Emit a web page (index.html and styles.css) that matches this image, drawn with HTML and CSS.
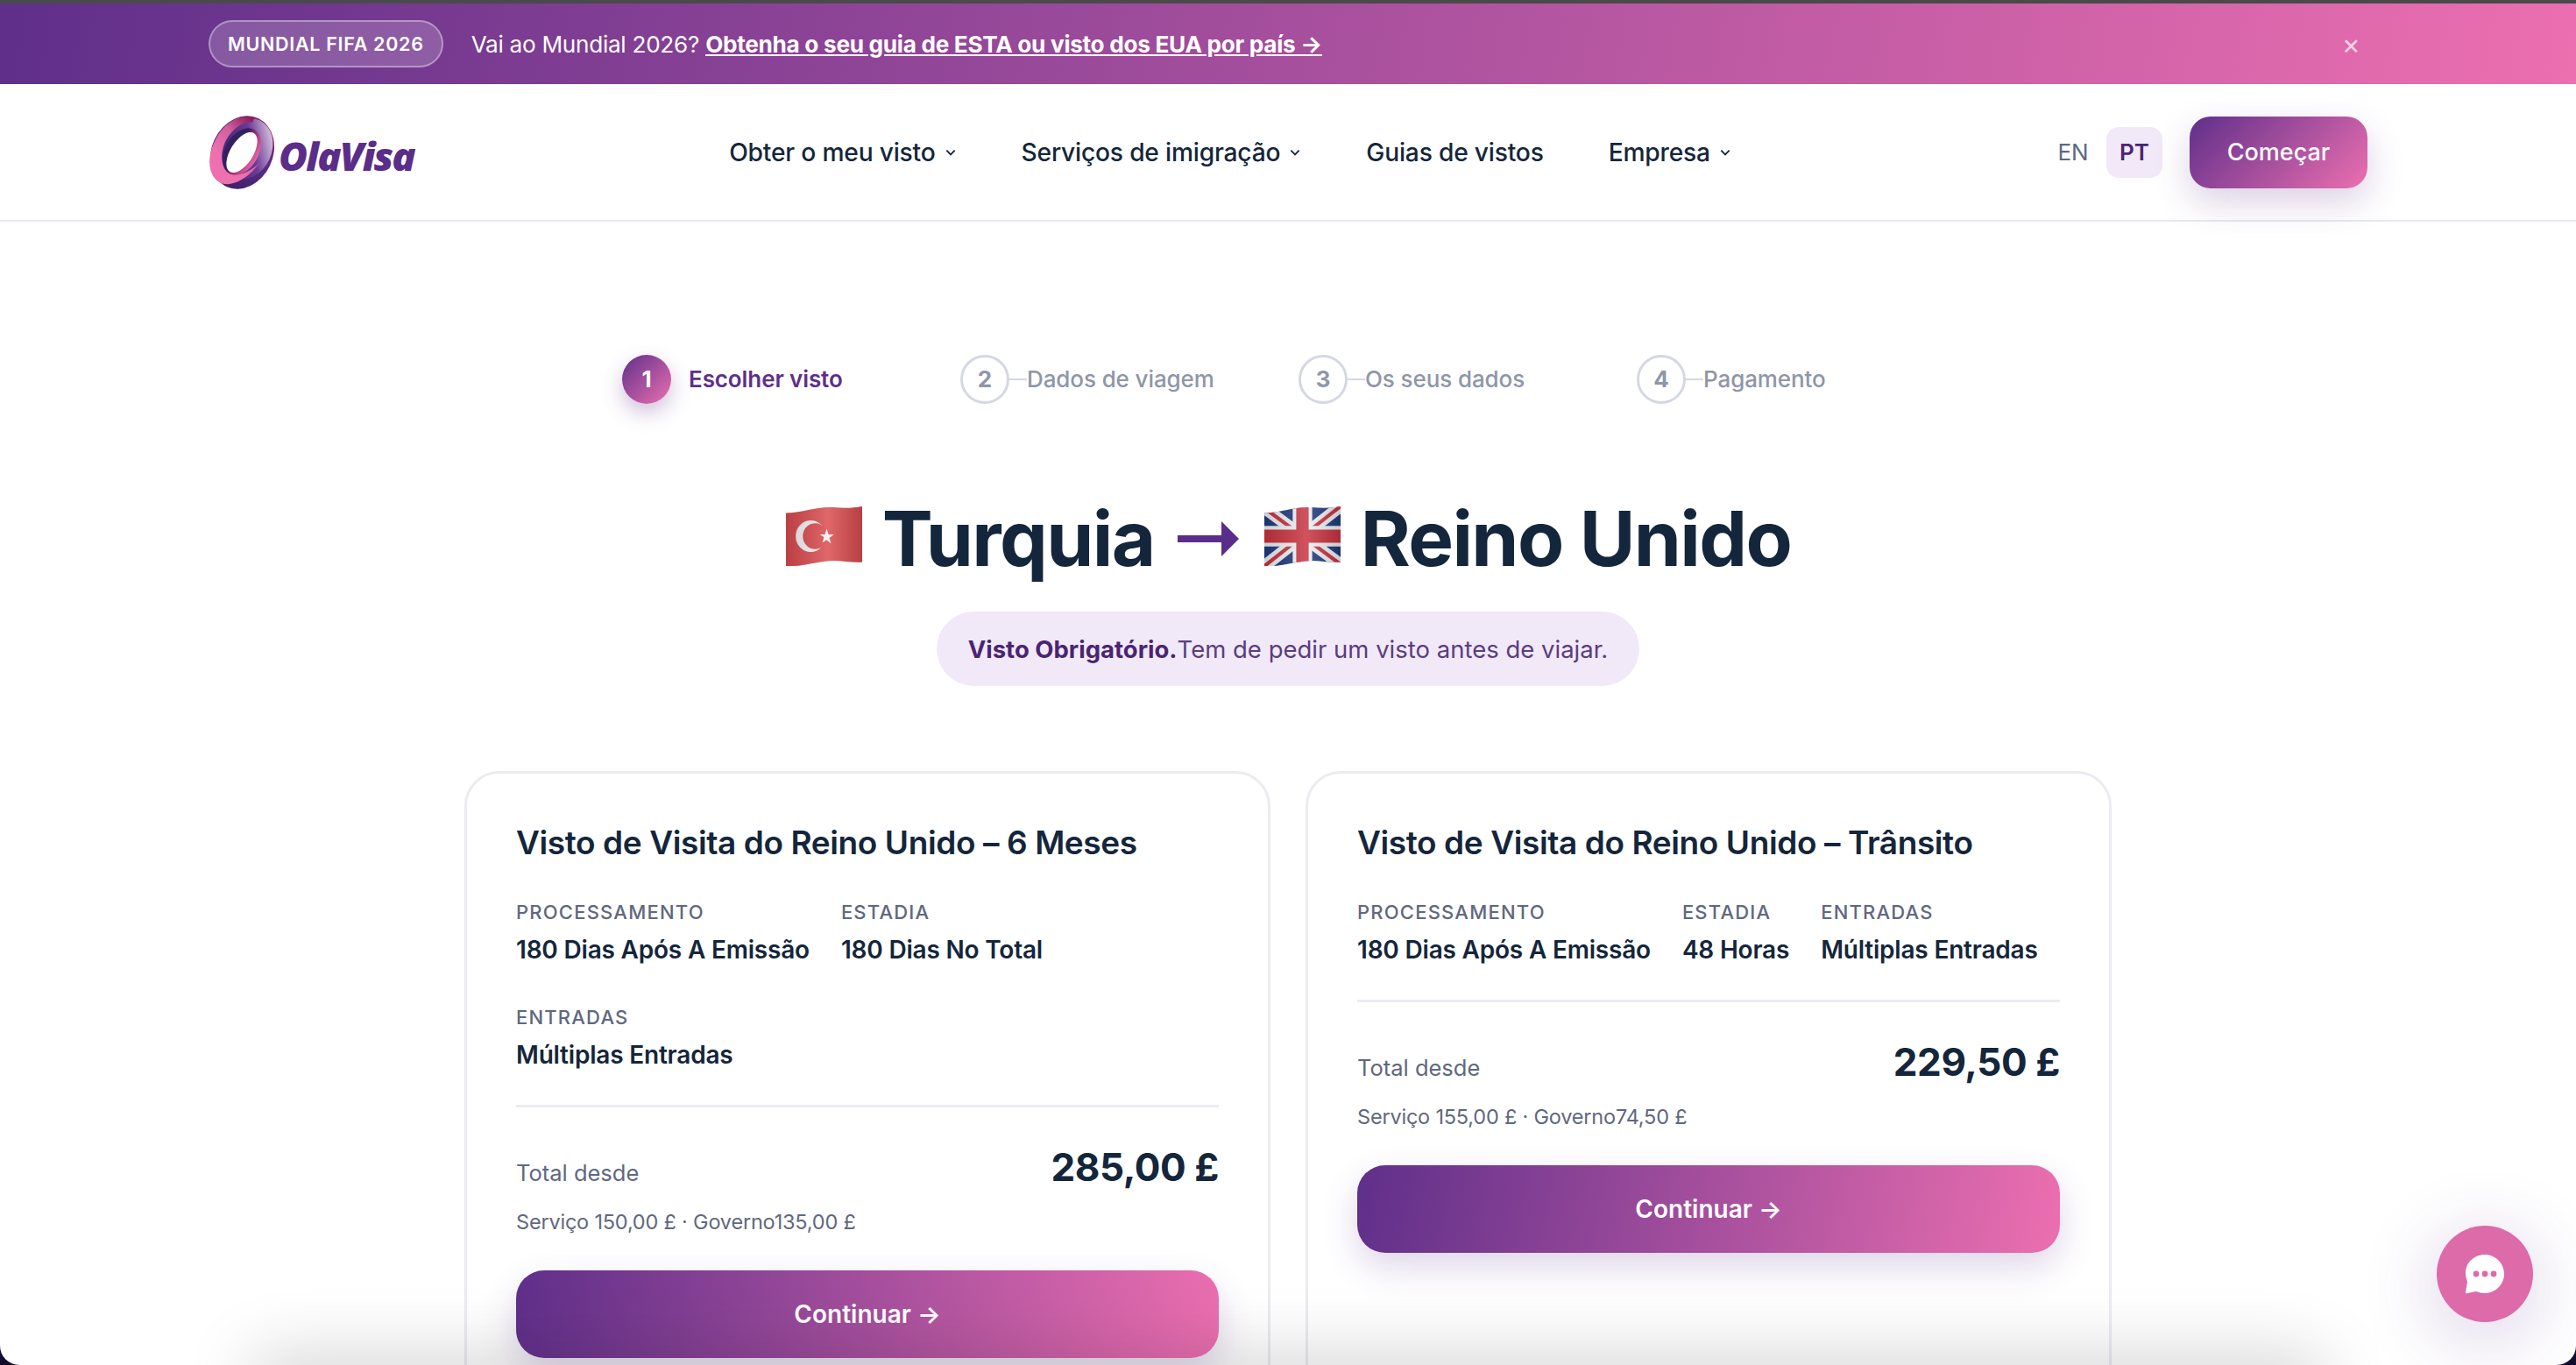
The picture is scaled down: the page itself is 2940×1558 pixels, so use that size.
FILE: index.html
```html
<!DOCTYPE html>
<html lang="pt">
<head>
    <meta charset="UTF-8">
    <title>OlaVisa</title>
    <link rel="stylesheet" href="styles.css">
</head>
<body>
    <div class="window">
        <!-- Promo banner -->
        <div class="banner">
            <div class="banner-inner">
                <span class="banner-badge">MUNDIAL FIFA 2026</span>
                <span class="banner-text">Vai ao Mundial 2026? <a href="#">Obtenha o seu guia de ESTA ou visto dos EUA por país →</a></span>
                <span class="banner-close">×</span>
            </div>
        </div>

        <!-- Header -->
        <header class="header">
            <div class="header-inner">
                <a href="#" class="logo">
                    <svg class="logo-ring" viewBox="0 0 78 84" width="78" height="84">
                        <defs>
                            <linearGradient id="ringBack" x1="0.6" y1="0" x2="0.4" y2="1">
                                <stop offset="0" stop-color="#8c1f5c"/>
                                <stop offset="0.4" stop-color="#5b2d8a"/>
                                <stop offset="1" stop-color="#3d2068"/>
                            </linearGradient>
                            <linearGradient id="ringPink" x1="0.8" y1="0" x2="0.2" y2="0.8">
                                <stop offset="0" stop-color="#8c1f5c"/>
                                <stop offset="0.4" stop-color="#d2609e"/>
                                <stop offset="0.8" stop-color="#ee70ae"/>
                            </linearGradient>
                            <linearGradient id="ringBand" x1="0.95" y1="0.1" x2="0.3" y2="0.7">
                                <stop offset="0" stop-color="#f0e0ec"/>
                                <stop offset="0.55" stop-color="#6a3a96"/>
                                <stop offset="1" stop-color="#4f2a80"/>
                            </linearGradient>
                            <linearGradient id="ringHole" x1="0" y1="0.5" x2="1" y2="0.5">
                                <stop offset="0.35" stop-color="#33205f"/>
                                <stop offset="0.6" stop-color="#a62f74"/>
                                <stop offset="1" stop-color="#e06aa8"/>
                            </linearGradient>
                        </defs>
                        <ellipse cx="38.5" cy="42" rx="35" ry="43" transform="rotate(25 38.5 42)" fill="url(#ringBack)"/>
                        <ellipse cx="43" cy="38" rx="29" ry="36" transform="rotate(25 43 38)" fill="url(#ringBand)"/>
                        <path d="M52 3C30-4 8 16 2 44c-4 20 6 36 22 34 12-2 24-10 34-24-8 8-22 16-32 12-12-4-14-22-6-38C28 14 40 6 50 8z" fill="url(#ringPink)"/>
                        <ellipse cx="38" cy="41" rx="19" ry="29" transform="rotate(30 38 41)" fill="url(#ringHole)"/>
                        <ellipse cx="38" cy="42" rx="13" ry="26" transform="rotate(32 38 42)" fill="#fff"/>
                    </svg>
                    <span class="logo-text">OlaVisa</span>
                </a>
                <nav class="nav">
                    <a href="#" class="nav-link">Obter o meu visto <svg class="chevron" viewBox="0 0 12 8"><path d="M2 2l4 4 4-4"/></svg></a>
                    <a href="#" class="nav-link">Serviços de imigração <svg class="chevron" viewBox="0 0 12 8"><path d="M2 2l4 4 4-4"/></svg></a>
                    <a href="#" class="nav-link">Guias de vistos</a>
                    <a href="#" class="nav-link">Empresa <svg class="chevron" viewBox="0 0 12 8"><path d="M2 2l4 4 4-4"/></svg></a>
                </nav>
                <div class="header-right">
                    <a href="#" class="lang">EN</a>
                    <a href="#" class="lang lang-active">PT</a>
                    <a href="#" class="start-button">Começar</a>
                </div>
            </div>
        </header>

        <main class="main">
            <!-- Steps -->
            <div class="steps">
                <div class="step step-active"><span class="step-num">1</span><span class="step-label">Escolher visto</span></div>
                <div class="step"><span class="step-num">2</span><span class="step-line"></span><span class="step-label">Dados de viagem</span></div>
                <div class="step"><span class="step-num">3</span><span class="step-line"></span><span class="step-label">Os seus dados</span></div>
                <div class="step"><span class="step-num">4</span><span class="step-line"></span><span class="step-label">Pagamento</span></div>
            </div>

            <h1 class="route">
                <svg class="flag" viewBox="0 0 88 66" preserveAspectRatio="none">
                    <defs>
                        <clipPath id="flagWave"><path d="M1 8C18 8 36 1 54 2c12 1 22 1 33-1v60c-14 1-26-3-42-1-16 2-30 6-44 5z"/></clipPath>
                        <linearGradient id="flagShine" x1="0" y1="0" x2="1" y2="0">
                            <stop offset="0" stop-color="#000" stop-opacity=".14"/>
                            <stop offset="0.55" stop-color="#fff" stop-opacity=".16"/>
                            <stop offset="1" stop-color="#000" stop-opacity=".16"/>
                        </linearGradient>
                    </defs>
                    <g clip-path="url(#flagWave)">
                        <rect width="88" height="66" fill="#d94a4e"/>
                        <circle cx="29" cy="33" r="17" fill="#f4f1f1"/>
                        <circle cx="34" cy="33" r="14" fill="#d8484c"/>
                        <path d="M47 25l2 6 6 0-5 4 2 6-5-4-5 3 2-6-5-3 6 0z" fill="#f4f1f1"/>
                        <rect width="88" height="66" fill="url(#flagShine)"/>
                    </g>
                </svg>
                <span>Turquia</span>
                <svg class="route-arrow" viewBox="0 0 70 40"><path d="M0 16h50V0l20 20-20 20V24H0z"/></svg>
                <svg class="flag" viewBox="0 0 88 66" preserveAspectRatio="none">
                    <g clip-path="url(#flagWave)">
                        <rect width="88" height="66" fill="#1f3a7c"/>
                        <path d="M0 2l88 62M88 0L0 66" stroke="#eef0f4" stroke-width="13"/>
                        <path d="M0 2l88 62M88 0L0 66" stroke="#c8323f" stroke-width="4"/>
                        <path d="M44 0v66M0 33h88" stroke="#eef0f4" stroke-width="22"/>
                        <path d="M44 0v66M0 33h88" stroke="#c8323f" stroke-width="14"/>
                        <rect width="88" height="66" fill="url(#flagShine)"/>
                    </g>
                </svg>
                <span>Reino Unido</span>
            </h1>

            <p class="notice"><strong>Visto Obrigatório.</strong>Tem de pedir um visto antes de viajar.</p>

            <!-- Visa cards -->
            <div class="cards">
                <div class="card">
                    <h3 class="card-title">Visto de Visita do Reino Unido – 6 Meses</h3>
                    <div class="facts">
                        <div class="fact"><span class="fact-label">PROCESSAMENTO</span><span class="fact-value">180 Dias Após A Emissão</span></div>
                        <div class="fact"><span class="fact-label">ESTADIA</span><span class="fact-value">180 Dias No Total</span></div>
                        <div class="fact"><span class="fact-label">ENTRADAS</span><span class="fact-value">Múltiplas Entradas</span></div>
                    </div>
                    <div class="total-row"><span class="total-label">Total desde</span><span class="total-price">285,00 £</span></div>
                    <p class="breakdown">Serviço 150,00 £ · Governo135,00 £</p>
                    <a href="#" class="continue-button">Continuar →</a>
                </div>
                <div class="card">
                    <h3 class="card-title">Visto de Visita do Reino Unido – Trânsito</h3>
                    <div class="facts">
                        <div class="fact"><span class="fact-label">PROCESSAMENTO</span><span class="fact-value">180 Dias Após A Emissão</span></div>
                        <div class="fact"><span class="fact-label">ESTADIA</span><span class="fact-value">48 Horas</span></div>
                        <div class="fact"><span class="fact-label">ENTRADAS</span><span class="fact-value">Múltiplas Entradas</span></div>
                    </div>
                    <div class="total-row"><span class="total-label">Total desde</span><span class="total-price">229,50 £</span></div>
                    <p class="breakdown">Serviço 155,00 £ · Governo74,50 £</p>
                    <a href="#" class="continue-button">Continuar →</a>
                </div>
            </div>
        </main>

        <!-- Soft shadow from something below the fold -->
        <div class="bottom-shadow"></div>

        <!-- Chat button -->
        <a href="#" class="chat-button">
            <svg viewBox="0 0 46 46" width="46" height="46">
                <path d="M23 1C11 1 1 10 1 22c0 4 1 7 2 10l-2 12c0 1 1 2 2 1l10-2c3 1 6 2 10 2 12 0 22-10 22-22S35 1 23 1z" fill="#fff"/>
                <circle cx="13" cy="23" r="3.4" fill="#dd6aa9"/>
                <circle cx="23" cy="23" r="3.4" fill="#dd6aa9"/>
                <circle cx="33" cy="23" r="3.4" fill="#dd6aa9"/>
            </svg>
        </a>
    </div>
</body>
</html>
```

FILE: styles.css
```css
/* General reset */
* {
    margin: 0;
    padding: 0;
    box-sizing: border-box;
}

html, body {
    height: 100%;
    overflow: hidden;
    background-color: #130c30;
}

body {
    font-family: Inter, "Liberation Sans", sans-serif;
    color: #14263b;
}

a {
    text-decoration: none;
    color: inherit;
}

/* Page clipped to the rounded bottom of the window */
.window {
    position: relative;
    height: 100%;
    overflow: hidden;
    background-color: #fff;
    border-radius: 0 0 22px 22px;
}

/* Promo banner */
.banner {
    height: 96px;
    border-top: 4px solid #4a4a4a;
    background: linear-gradient(100deg, #5f2f8a, #ec6fb0);
    color: #fff;
}

.banner-inner {
    max-width: 2464px;
    height: 100%;
    margin: 0 auto;
    display: flex;
    align-items: center;
}

.banner-badge {
    padding: 12px 20px;
    font-size: 21.5px;
    font-weight: 600;
    line-height: 26px;
    letter-spacing: 0.7px;
    background-color: rgba(255, 255, 255, 0.18);
    border: 2px solid rgba(255, 255, 255, 0.35);
    border-radius: 40px;
    margin-right: 32px;
}

.banner-text {
    font-size: 26.2px;
    letter-spacing: -0.3px;
}

.banner-text a {
    font-weight: 700;
    text-decoration: underline;
}

.banner-close {
    margin-left: auto;
    font-size: 32px;
    margin-right: 8px;
    opacity: 0.7;
}

/* Header */
.header {
    height: 157px;
    border-bottom: 2px solid #e7e8ef;
}

.header-inner {
    max-width: 2464px;
    height: 100%;
    margin: 0 auto;
    display: flex;
    align-items: center;
    justify-content: space-between;
}

.logo {
    display: flex;
    align-items: center;
    width: 236px;
}

.logo-ring {
    flex-shrink: 0;
}

.logo-text {
    margin: 8px 0 0 2px;
    font-family: "Open Sans", sans-serif;
    font-size: 45px;
    font-weight: 800;
    font-style: italic;
    letter-spacing: -1.8px;
    color: #5b2d8a;
}

.nav {
    display: flex;
    gap: 74px;
}

.nav-link {
    display: flex;
    align-items: center;
    gap: 10px;
    font-size: 28.2px;
    font-weight: 500;
    letter-spacing: -0.2px;
    color: #14263b;
}

.chevron {
    width: 14px;
    height: 10px;
    fill: none;
    stroke: #14263b;
    stroke-width: 1.6;
}

.header-right {
    display: flex;
    align-items: center;
}

.lang {
    width: 64px;
    height: 58px;
    display: flex;
    align-items: center;
    justify-content: center;
    font-size: 26px;
    color: #5f6880;
    border-radius: 14px;
}

.lang:first-child {
    margin-right: 6px;
}

.lang-active {
    background-color: #f1e9f8;
    color: #4a2472;
    font-weight: 600;
    margin-right: 31px;
}

.start-button {
    width: 203px;
    height: 82px;
    display: flex;
    align-items: center;
    justify-content: center;
    font-size: 27px;
    font-weight: 500;
    color: #fff;
    border-radius: 24px;
    background: linear-gradient(135deg, #5f2f8a, #ec6fb0);
    box-shadow: 0 16px 40px rgba(95, 47, 138, 0.22);
}

/* Main content */
.main {
    max-width: 2464px;
    margin: 0 auto;
    padding-top: 152px;
    display: flex;
    flex-direction: column;
    align-items: center;
}

.steps {
    display: grid;
    grid-template-columns: repeat(4, 386px);
    padding-left: 24px;
}

.step {
    display: flex;
    align-items: center;
    font-size: 26px;
    line-height: 52px;
    font-weight: 500;
    letter-spacing: -0.1px;
    color: #8f96a8;
}

.step-num {
    width: 56px;
    height: 56px;
    border-radius: 50%;
    border: 3px solid #d5d8e2;
    display: flex;
    align-items: center;
    justify-content: center;
    font-weight: 700;
    flex-shrink: 0;
}

.step-line {
    width: 20px;
    height: 2px;
    background-color: #d5d8e2;
}

.step-active {
    color: #5f2f8a;
    font-weight: 600;
}

.step-active .step-num {
    border: none;
    color: #fff;
    background: linear-gradient(135deg, #5f2f8a, #ec6fb0);
    box-shadow: 0 10px 24px rgba(95, 47, 138, 0.3);
    margin-right: 20px;
}

.route {
    display: flex;
    align-items: center;
    margin-top: 106px;
    font-size: 87px;
    font-weight: 700;
    line-height: 96px;
    letter-spacing: -1.6px;
    color: #14263b;
}

.flag {
    width: 89px;
    height: 70px;
    margin: 0 22px 6px 0;
}

.route-arrow {
    width: 70px;
    height: 40px;
    margin: 0 28px 0 26px;
    fill: #5b2d8a;
}

.notice {
    margin-top: 35px;
    padding: 0 36px;
    height: 85px;
    display: flex;
    align-items: center;
    font-size: 27.5px;
    color: #5a3d80;
    background-color: #f1e9f8;
    border-radius: 43px;
}

.notice strong {
    font-weight: 700;
    color: #4a2472;
}

/* Visa cards */
.cards {
    margin-top: 97px;
    display: grid;
    grid-template-columns: repeat(2, 920px);
    gap: 40px;
    align-items: stretch;
}

.card {
    padding: 52px 56px;
    min-height: 900px;
    background-color: #fff;
    border: 3px solid #ebecf2;
    border-radius: 40px;
}

.card-title {
    font-size: 37px;
    font-weight: 600;
    line-height: 54px;
    letter-spacing: -0.4px;
    color: #14263b;
}

.facts {
    margin-top: 38px;
    padding-bottom: 38px;
    border-bottom: 3px solid #ebecf2;
    display: flex;
    flex-wrap: wrap;
    column-gap: 36px;
    row-gap: 44px;
}

.fact {
    display: flex;
    flex-direction: column;
    gap: 10px;
}

.fact-label {
    font-size: 22px;
    line-height: 28px;
    font-weight: 500;
    letter-spacing: 1.2px;
    color: #5f6880;
}

.fact-value {
    font-size: 28px;
    line-height: 38px;
    font-weight: 600;
    letter-spacing: -0.2px;
    color: #14263b;
}

.total-row {
    margin-top: 36px;
    display: flex;
    align-items: center;
    justify-content: space-between;
}

.total-label {
    margin-top: 12px;
    font-size: 25.5px;
    color: #5f6880;
}

.total-price {
    font-size: 44px;
    line-height: 64px;
    font-weight: 700;
    letter-spacing: -0.4px;
    color: #14263b;
}

.breakdown {
    margin-top: 14px;
    font-size: 23.5px;
    line-height: 34px;
    letter-spacing: -0.2px;
    color: #5f6880;
}

.continue-button {
    margin-top: 38px;
    height: 100px;
    display: flex;
    align-items: center;
    justify-content: center;
    font-size: 28px;
    font-weight: 600;
    color: #fff;
    border-radius: 32px;
    background: linear-gradient(100deg, #5f2f8a, #ec6fb0);
    box-shadow: 0 16px 40px rgba(95, 47, 138, 0.2);
}

/* Chat button */
.chat-button {
    position: absolute;
    right: 49px;
    bottom: 49px;
    width: 110px;
    height: 110px;
    display: flex;
    align-items: center;
    justify-content: center;
    border-radius: 50%;
    background-color: #dd6aa9;
    box-shadow: 0 16px 80px 10px rgba(95, 47, 138, 0.18);
}

.bottom-shadow {
    position: absolute;
    left: 300px;
    right: 300px;
    bottom: -50px;
    height: 50px;
    box-shadow: 0 0 80px 10px rgba(0, 0, 0, 0.18);
}
```
